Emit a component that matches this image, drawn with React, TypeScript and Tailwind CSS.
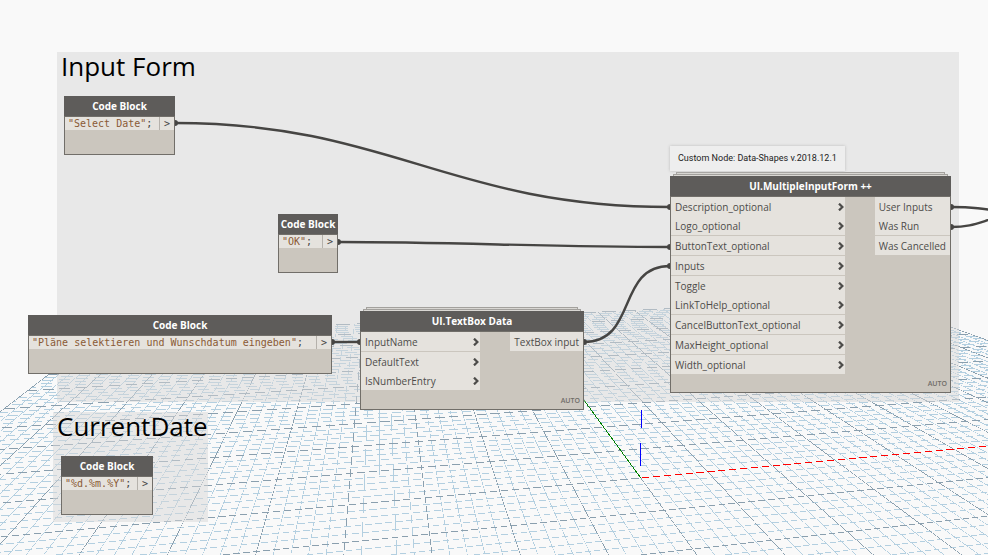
import type { ReactNode } from "react";
import clsx from "clsx";

// ---------------------------------------------------------------------------
// Background grid
// ---------------------------------------------------------------------------

const HORIZON = 120;
const BASE_Y = 555;
const VANISH_LEFT = 379.5;
const VANISH_RIGHT = 4530;
const GRID_HALF = 50;
const NEAREST = -25;

// Thinner than a pixel and not smoothed, so slanted lines break into dashes
const LINE_WIDTH = 0.66;

type Point = [number, number];

const depthX = (i: number) => 697 + 17.66 * i;
const crossSlope = (j: number) => 1 / (0.002793 + 0.0000494 * j) / (VANISH_RIGHT - 640);

// Screen position of the crossing between depth line i and cross line j
function project(i: number, j: number): Point {
  const m = crossSlope(j);
  const t =
    (m * (VANISH_RIGHT - VANISH_LEFT)) /
    (BASE_Y - HORIZON + m * (depthX(i) - VANISH_LEFT));
  return [
    VANISH_LEFT + (depthX(i) - VANISH_LEFT) * t,
    HORIZON + (BASE_Y - HORIZON) * t,
  ];
}

function strip([ax, ay]: Point, [bx, by]: Point, width = LINE_WIDTH) {
  const length = Math.hypot(bx - ax, by - ay);
  const nx = (-(by - ay) / length) * (width / 2);
  const ny = ((bx - ax) / length) * (width / 2);
  const corners = [
    [ax + nx, ay + ny],
    [bx + nx, by + ny],
    [bx - nx, by - ny],
    [ax - nx, ay - ny],
  ];
  return `M${corners.map(([x, y]) => `${x.toFixed(3)} ${y.toFixed(3)}`).join("L")}Z`;
}

const range = (from: number, to: number) =>
  Array.from({ length: to - from + 1 }, (_, n) => from + n);

const depthLines = (major: boolean) =>
  range(-GRID_HALF, GRID_HALF)
    .filter((i) => (i % 5 === 0) === major)
    .map((i) => strip(project(i, NEAREST), project(i, GRID_HALF)))
    .join("");

const crossLines = (major: boolean) =>
  range(NEAREST, GRID_HALF)
    .filter((j) => (j % 5 === 0) === major)
    .map((j) => strip(project(-GRID_HALF, j), project(GRID_HALF, j)))
    .join("");

function Grid() {
  return (
    <svg
      className="absolute inset-0 h-full w-full"
      shapeRendering="crispEdges"
      aria-hidden="true"
    >
      <path d={depthLines(false)} fill="#b3cfe0" />
      <path d={crossLines(false)} fill="#b3cfe0" />
      <path d={depthLines(true)} fill="#8a9fae" />
      <path d={crossLines(true)} fill="#8a9fae" />
      <path d={strip(project(0, 0), project(0, GRID_HALF), 0.9)} fill="#008000" />
      <path d={strip(project(0, 0), project(GRID_HALF, 0))} fill="#ff0000" />
      <path d="M641 410h1v18h-1zM640 443h1v23h-1z" fill="#0000ff" />
    </svg>
  );
}

// ---------------------------------------------------------------------------
// Wires
// ---------------------------------------------------------------------------

const WIRES = [
  "M175 123C390 123 450 207 670 207",
  "M338 242C450 242 550 247 670 247",
  "M332 342H360",
  "M584 342C638 342 616 266 670 266",
  "M951 207C975 207 985 209 1010 213",
  "M951 227C975 227 980 221 1010 214",
];

const WIRE_ENDS = [
  [175, 123],
  [670, 207],
  [338, 242],
  [670, 247],
  [332, 342],
  [360, 342],
  [584, 342],
  [670, 266],
  [951, 207],
  [951, 227],
];

function Wires() {
  return (
    <svg className="absolute inset-0 h-full w-full" fill="none" aria-hidden="true">
      {WIRES.map((d) => (
        <path key={d} d={d} stroke="#464543" strokeWidth="2.4" />
      ))}
      {WIRE_ENDS.map(([x, y]) => (
        <circle key={`${x}-${y}`} cx={x} cy={y} r="3" fill="#464543" />
      ))}
    </svg>
  );
}

// ---------------------------------------------------------------------------
// Nodes
// ---------------------------------------------------------------------------

interface NodeProps {
  title: string;
  className: string;
  children: ReactNode;
}

function Node({ title, className, children }: NodeProps) {
  return (
    <article className={clsx("absolute flex flex-col", className)}>
      <h3 className="flex h-5 shrink-0 items-center justify-center bg-[#5e5c5a] text-[10px] font-bold text-white">
        {title}
      </h3>
      <div className="flex flex-1 flex-col border border-[#716e69] bg-[#cbc6be]">
        {children}
      </div>
    </article>
  );
}

function CodeBlock({ code, className }: { code: string; className: string }) {
  return (
    <Node title="Code Block" className={clsx("h-[59px]", className)}>
      <div className="flex h-[13px] bg-[#e5e2dd] font-['DejaVu_Sans_Mono',monospace] text-[10px] leading-[13px]">
        <code className="flex-1 whitespace-nowrap pl-[3px] font-['DejaVu_Sans_Mono',monospace] text-[#8a5a35]">
          {code}
          <span className="text-[#444444]">;</span>
        </code>
        <button
          type="button"
          aria-label="Output"
          className="w-[15px] border-l border-[#b5b1ab] text-center text-[#444444]"
        >
          &gt;
        </button>
      </div>
    </Node>
  );
}

interface Port {
  name: string;
  line?: boolean;
}

function Chevron() {
  return (
    <svg className="h-2 w-1.5" viewBox="0 0 6 8" fill="none" aria-hidden="true">
      <path d="M1 0.6L4.4 4L1 7.4" stroke="#4d4c4a" strokeWidth="2.2" />
    </svg>
  );
}

function Ports({ ports, input, className }: { ports: Port[]; input?: boolean; className?: string }) {
  return (
    <ul className={className}>
      {ports.map(({ name, line }) => (
        <li
          key={name}
          className={clsx("bg-[#e5e2dd]", line ? "h-5 border-b border-[#cbc6be]" : "h-[19px]")}
        >
          <button
            type="button"
            className={clsx(
              "flex h-full w-full items-center justify-between whitespace-nowrap pt-px text-[10px] text-[#4d4c4a]",
              input ? "pl-1 pr-px" : "px-1",
            )}
          >
            {name}
            {input && <Chevron />}
          </button>
        </li>
      ))}
    </ul>
  );
}

interface CustomNodeProps {
  title: string;
  className: string;
  inputs: Port[];
  outputs: Port[];
  inputWidth: string;
}

function CustomNode({ title, className, inputs, outputs, inputWidth }: CustomNodeProps) {
  return (
    <Node title={title} className={className}>
      {/* Sheets stacked behind the header */}
      <div className="absolute inset-x-1.5 -top-1 h-0.5 border-x border-t border-[#a3a19d] bg-[#d9d7d3]" />
      <div className="absolute inset-x-[3px] -top-0.5 h-0.5 border-x border-t border-[#a3a19d] bg-[#d9d7d3]" />
      <div className="flex items-start justify-between">
        <Ports ports={inputs} input className={inputWidth} />
        <Ports ports={outputs} />
      </div>
      <span className="mt-auto pb-1 pr-[3px] text-right text-[7px] font-semibold leading-[9px] text-[#6f6c68]">
        AUTO
      </span>
    </Node>
  );
}

const FORM_INPUTS: Port[] = [
  { name: "Description_optional" },
  { name: "Logo_optional", line: true },
  { name: "ButtonText_optional", line: true },
  { name: "Inputs", line: true },
  { name: "Toggle" },
  { name: "LinkToHelp_optional", line: true },
  { name: "CancelButtonText_optional", line: true },
  { name: "MaxHeight_optional", line: true },
  { name: "Width_optional" },
];

const FORM_OUTPUTS: Port[] = [
  { name: "User Inputs" },
  { name: "Was Run", line: true },
  { name: "Was Cancelled" },
];

const TEXTBOX_INPUTS: Port[] = [
  { name: "InputName", line: true },
  { name: "DefaultText" },
  { name: "IsNumberEntry" },
];

// ---------------------------------------------------------------------------
// Workspace
// ---------------------------------------------------------------------------

function Group({ title, className }: { title: string; className: string }) {
  return (
    <section className={clsx("absolute bg-[#d7d7d7]/50 px-1", className)}>
      <h2 className="whitespace-nowrap text-[26px] leading-7 text-black">{title}</h2>
    </section>
  );
}

export default function App() {
  return (
    <main className="relative min-h-screen overflow-hidden bg-[#f9f9f9] font-['Open_Sans',sans-serif]">
      <Grid />
      <Group title="Input Form" className="left-[57px] top-[52px] h-[350px] w-[902px]" />
      <Group title="CurrentDate" className="left-[53px] top-[412px] h-[110px] w-[155px]" />
      <Wires />

      <CodeBlock code={'"Select Date"'} className="left-16 top-24 w-[111px]" />
      <CodeBlock code={'"OK"'} className="left-[278px] top-[214px] w-[60px]" />
      <CodeBlock
        code={'"Pläne selektieren und Wunschdatum eingeben"'}
        className="left-7 top-[315px] w-[304px]"
      />
      <CodeBlock code={'"%d.%m.%Y"'} className="left-[61px] top-[456px] w-[92px]" />

      <CustomNode
        title="UI.TextBox Data"
        className="left-[360px] top-[311px] h-[99px] w-[224px]"
        inputs={TEXTBOX_INPUTS}
        outputs={[{ name: "TextBox input" }]}
        inputWidth="w-[119px]"
      />
      <CustomNode
        title="UI.MultipleInputForm ++"
        className="left-[670px] top-[176px] h-[217px] w-[281px]"
        inputs={FORM_INPUTS}
        outputs={FORM_OUTPUTS}
        inputWidth="w-[174px]"
      />
      <p className="absolute left-[670px] top-[146px] flex h-[25px] items-center whitespace-nowrap bg-[#eeeeee] px-2 font-['Roboto',sans-serif] text-[9px] text-[#222222] shadow-[0_0_3px_#bbbbbb]">
        Custom Node: Data-Shapes v.2018.12.1
      </p>
    </main>
  );
}
